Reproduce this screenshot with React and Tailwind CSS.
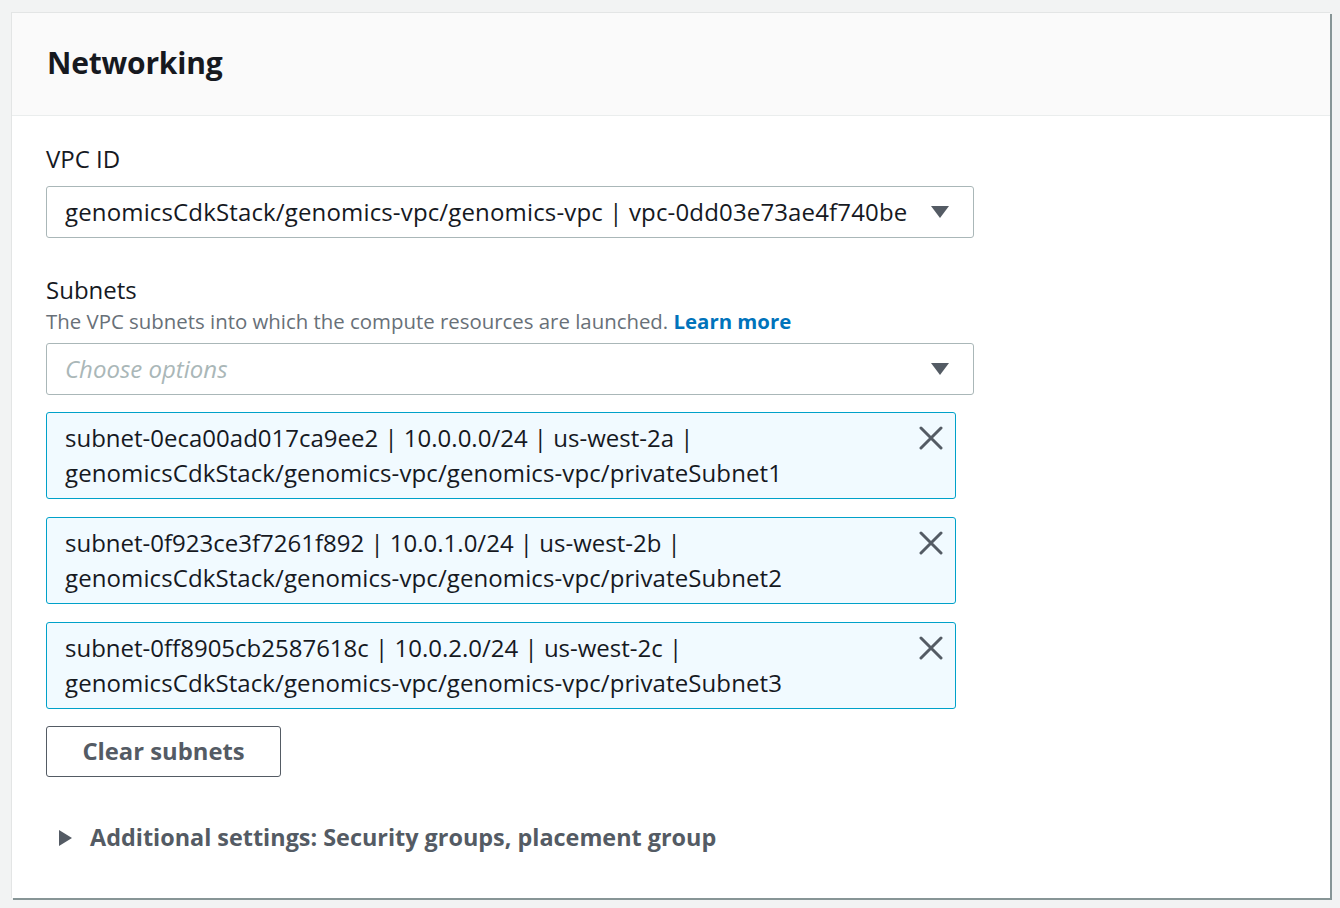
import React from "react";

const Caret = () => (
  <svg width="20" height="14" viewBox="0 0 20 14" className="shrink-0">
    <path d="M1 1 H19 L10 13 Z" fill="#545b64" />
  </svg>
);

const XIcon = () => (
  <svg width="24" height="24" viewBox="0 0 24 24" className="shrink-0">
    <path d="M2 2 L22 22 M22 2 L2 22" stroke="#545b64" strokeWidth="3" strokeLinecap="round" />
  </svg>
);

const subnets = [
  ["subnet-0eca00ad017ca9ee2 | 10.0.0.0/24 | us-west-2a |", "genomicsCdkStack/genomics-vpc/genomics-vpc/privateSubnet1"],
  ["subnet-0f923ce3f7261f892 | 10.0.1.0/24 | us-west-2b |", "genomicsCdkStack/genomics-vpc/genomics-vpc/privateSubnet2"],
  ["subnet-0ff8905cb2587618c | 10.0.2.0/24 | us-west-2c |", "genomicsCdkStack/genomics-vpc/genomics-vpc/privateSubnet3"],
];

export default function App() {
  return (
    <div className="w-[1340px] h-[908px] bg-[#f2f3f3] pt-[12px] pl-[11px] overflow-hidden" style={{ fontFamily: '"Open Sans", "Noto Sans", sans-serif' }}>
      <div className="w-[1319px] h-[886px] bg-white border-l border-t border-[#e3e5e5] shadow-[2px_2px_0_#879596] flex flex-col">
        <div className="h-[103px] bg-[#fafafa] border-b border-[#eaeded] flex items-center pl-[35px]">
          <h2 className="text-[30px] font-bold text-[#16191f] tracking-[-0.2px] mt-[-3px]">Networking</h2>
        </div>
        <div className="pl-[34px] pt-[27px] flex flex-col text-[#16191f]">
          <div className="text-[24px] leading-[32px]">VPC ID</div>
          <div className="mt-[11px] w-[928px] h-[52px] border border-[#aab7b8] rounded-[3px] flex items-center justify-between pl-[18px] pr-[23px]">
            <span className="text-[24px] tracking-[0.15px]">genomicsCdkStack/genomics-vpc/genomics-vpc | vpc-0dd03e73ae4f740be</span>
            <Caret />
          </div>
          <div className="mt-[36px] text-[24px] leading-[32px]">Subnets</div>
          <div className="text-[20.4px] leading-[30px] text-[#687078]">
            The VPC subnets into which the compute resources are launched. <span className="text-[#0073bb] font-bold">Learn more</span>
          </div>
          <div className="mt-[7px] w-[928px] h-[52px] border border-[#aab7b8] rounded-[3px] flex items-center justify-between pl-[18px] pr-[23px]">
            <span className="text-[24px] italic text-[#aab7b8]">Choose options</span>
            <Caret />
          </div>
          <div className="mt-[17px] flex flex-col gap-[18px]">
            {subnets.map(([a, b]) => (
              <div key={a} className="w-[910px] h-[87px] bg-[#f1faff] border border-[#00a1c9] rounded-[3px] flex justify-between pl-[18px] pr-[12px] pt-[7px]">
                <div className="text-[24px] leading-[35px]">
                  <div>{a}</div>
                  <div className="tracking-[0.1px]">{b}</div>
                </div>
                <div className="pt-[6px]"><XIcon /></div>
              </div>
            ))}
          </div>
          <div className="mt-[17px]">
            <button className="w-[235px] h-[51px] border border-[#545b64] rounded-[3px] text-[23.8px] font-bold text-[#545b64] bg-white">Clear subnets</button>
          </div>
          <div className="mt-[43px] flex items-center gap-[17px] pl-[12px]">
            <svg width="15" height="18" viewBox="0 0 15 18"><path d="M1 1 L14 9 L1 17 Z" fill="#545b64" /></svg>
            <span className="text-[23.4px] font-bold text-[#545b64]">Additional settings: Security groups, placement group</span>
          </div>
        </div>
      </div>
    </div>
  );
}
